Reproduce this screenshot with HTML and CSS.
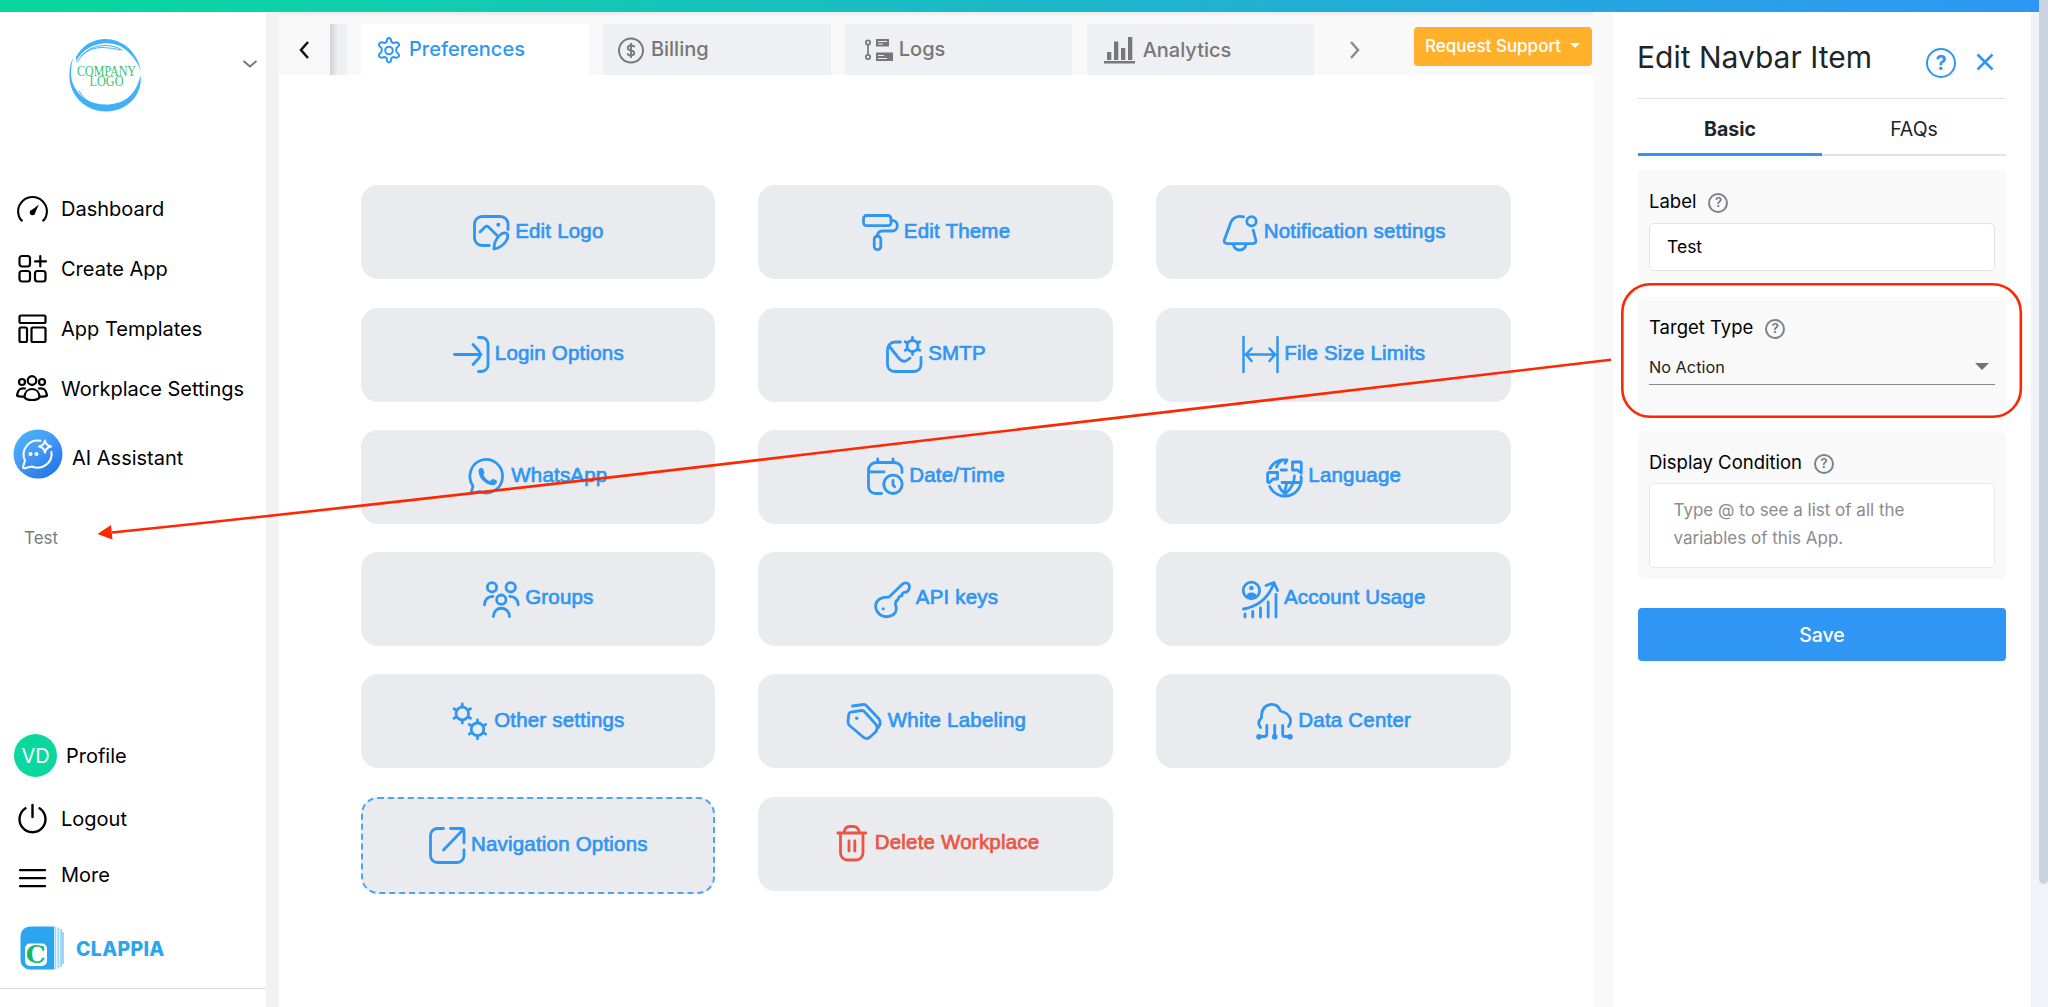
FILE: index.html
```html
<!DOCTYPE html>
<html lang="en">
<head>
<meta charset="utf-8">
<title>Workplace Settings</title>
<link rel="stylesheet" href="styles.css">
</head>
<body>
<div class="topbar"></div>
<div class="app">
  <aside class="sidebar">
    <div class="brand">
      <svg class="brand-logo" viewBox="0 0 76 76">
        <g fill="none" stroke="#3fb1fb" stroke-linecap="round">
          <path fill="#3fb1fb" stroke="none" d="M73.500 38C76 60 58 74.500 39 74.500C18 74.500 1 58 2.500 36Q2.500 28 6 21Q2 37 6 47C12 61 24 67.500 39 67.500C56 67.500 69 59 73.500 38Z"/>
          <path fill="#3fb1fb" stroke="none" d="M9 20C18 3 36-1 50 4C63 9 71 20 74 34C69 22 60 10 47 7C32 4 17 10 9 24Z"/>
          <path stroke-width="1" d="M10 25Q20 8 38 8.500Q48 8.500 55 13M14 19Q24 10 36 10.500Q47 11 53 13M12 54Q17 63 26 67"/>
        </g>
        <text x="39.500" y="38.800" text-anchor="middle" textLength="59" lengthAdjust="spacingAndGlyphs" class="logo-text">COMPANY</text>
        <text x="39.500" y="49" text-anchor="middle" textLength="34" lengthAdjust="spacingAndGlyphs" class="logo-text">LOGO</text>
      </svg>
      <svg class="brand-caret" viewBox="0 0 16 10"><path d="M1.500 2l6.500 5.500L14.500 2" fill="none" stroke="#6c757d" stroke-width="1.800"/></svg>
    </div>
    <nav class="nav">
      <a class="nav-item"><svg class="nav-icon" viewBox="0 0 32 32"><path d="M5.300 27.500A14.400 14.400 0 1 1 27.700 27.500M5 27.500h1.800M26.200 27.500h1.800" fill="none" stroke="#000" stroke-width="2"/><circle cx="16.500" cy="19.500" r="2.700"/><path d="M14.500 18l8.500-6.500-4.500 9.500z"/></svg><span>Dashboard</span></a>
      <a class="nav-item"><svg class="nav-icon line" viewBox="0 0 32 32"><rect x="3.500" y="3" width="10.500" height="10.500" rx="2.500"/><rect x="3.500" y="18" width="10.500" height="10.500" rx="2.500"/><rect x="19" y="18" width="10.500" height="10.500" rx="2.500"/><path d="M24.300 3v10.500M19 8.300h11"/></svg><span>Create App</span></a>
      <a class="nav-item"><svg class="nav-icon line" viewBox="0 0 32 32"><rect x="3.500" y="2.500" width="26" height="7.500" rx="1.500"/><rect x="3.500" y="14.500" width="7.500" height="14.500" rx="1.500"/><rect x="15.500" y="14.500" width="14" height="14.500" rx="1.500"/></svg><span>App Templates</span></a>
      <a class="nav-item"><svg class="nav-icon line" viewBox="0 0 32 32"><circle cx="16" cy="7.500" r="4.300"/><circle cx="6" cy="9" r="3"/><circle cx="26" cy="9" r="3"/><path d="M8.500 24.500c0-5 3-8.500 7.500-8.500s7.500 3.500 7.500 8.500q-2 2.500-7.500 2.500t-7.500-2.500zM9 15.500Q2 14 1 22.500q2 1.500 6.500 1M23 15.500q7-1.500 8 7-2 1.500-6.500 1"/></svg><span>Workplace Settings</span></a>
      <a class="nav-item assistant">
        <svg viewBox="0 0 50 50"><defs><linearGradient id="ai" x1="0" y1="0" x2=".8" y2="1"><stop offset="0" stop-color="#49b9fb"/><stop offset=".45" stop-color="#469df6"/><stop offset="1" stop-color="#2472e6"/></linearGradient></defs><circle cx="25" cy="25" r="24.500" fill="url(#ai)"/><g fill="none" stroke="#fff" stroke-width="2" stroke-linecap="round" stroke-linejoin="round"><path d="M27.500 11.800A14 14 0 0 0 12 31.500L10 38q0 1.500 1.500 1.200L19 37.500A14 14 0 0 0 38.500 23"/><path d="M32 11.500q.8 5 6 6-5.200 1-6 6-.8-5-6-6 5.200-1 6-6z"/></g><circle cx="17.500" cy="25" r="2" fill="#fff"/><circle cx="23.500" cy="25" r="2" fill="#fff"/></svg>
        <span>AI Assistant</span></a>
      <a class="nav-custom">Test</a>
    </nav>
    <div class="nav-bottom">
      <a class="nav-item profile"><span class="avatar">VD</span><span>Profile</span></a>
      <a class="nav-item logout"><svg class="nav-icon" viewBox="0 0 32 32"><path d="M9.500 5.300a13 13 0 1 0 14 0M16.500 2v12" fill="none" stroke="#000" stroke-width="2.400" stroke-linecap="round"/></svg><span>Logout</span></a>
      <a class="nav-item more"><svg class="nav-icon" viewBox="0 0 32 32"><path d="M4 7.200h25M4 15.200h25M4 23.200h25" stroke="#000" stroke-width="2.200" stroke-linecap="round"/></svg><span>More</span></a>
      <a class="clappia">
        <svg viewBox="0 0 44 44"><path d="M10 .500h24v43H10A9.500 9.500 0 0 1 .500 34V10A9.500 9.500 0 0 1 10 .500z" fill="#2ba5ee"/><path d="M34.300.500h2v43h-2zM37.300 1.500h2v41h-2z" fill="#a5d8f8"/><path d="M40.300 3h1.500v38h-1.500z" fill="#7fc9f6"/><path d="M42.500 6h1v32h-1z" fill="#41b0f1"/><rect x="5" y="17.500" width="22" height="22.500" rx="5" fill="#fff"/><text x="15.800" y="37" text-anchor="middle" class="clappia-c">C</text></svg>
        <span>CLAPPIA</span>
      </a>
    </div>
  </aside>

  <main class="main">
    <header class="tabs">
      <svg class="tab-prev" viewBox="0 0 12 18"><path d="M10 1L3 9l7 8" fill="none" stroke="#111" stroke-width="2.500"/></svg>
      <div class="tab-stub"></div>
      <div class="tab active"><svg viewBox="0 0 28 28"><g fill="none" stroke="#3096f3" stroke-width="2" stroke-linejoin="round"><circle cx="14" cy="14.500" r="3.800"/><path d="M11.700 5.500Q12 2 14 2t2.300 3.500q.5 1.200 2 1.500l3.200-.8q1.600.2 2.500 1.800.8 1.500-2.500 4-.7 2 0 4 3.300 2.500 2.500 4-.9 1.600-2.500 1.800l-3.200-.8q-1.500.3-2 1.500-.3 4-2.300 4t-2.300-4q-.5-1.200-2-1.500l-3.200.8q-1.600-.2-2.500-1.800-.8-1.500 2.500-4 .7-2 0-4Q3.200 9.500 4 8q.9-1.600 2.500-1.800L9.700 7q1.500-.3 2-1.500z"/></g></svg><span>Preferences</span></div>
      <div class="tab billing"><svg viewBox="0 0 28 28"><circle cx="14" cy="14.500" r="12" fill="none" stroke="#777" stroke-width="1.900"/><path d="M17.500 11.300Q17 9.500 14 9.500t-3.200 2.300Q10.800 14 14 14.500t3.300 2.500q0 2.300-3.300 2.300t-3.500-2M14 7v15" fill="none" stroke="#777" stroke-width="1.800"/></svg><span>Billing</span></div>
      <div class="tab logs"><svg viewBox="0 0 30 28"><g fill="none" stroke="#777" stroke-width="1.700"><circle cx="4" cy="5.500" r="2.200"/><circle cx="4" cy="20" r="2.200"/><path d="M4 7.500v10.500"/></g><path d="M12 2h13v7.500H12zM12 15.500h17V24H12z" fill="#777"/><path d="M14 4.500h9M14 7h5M14 18.500h6M14 21.500h9" stroke="#eff0f3" stroke-width="1"/></svg><span>Logs</span></div>
      <div class="tab analytics"><svg viewBox="0 0 32 28"><path d="M3 16h4.300v8H3zM10 5.500h4.300V24H10zM17 12h4.300v12H17zM24 1h4.300v23H24zM0 25h31v2.500H0z" fill="#777"/></svg><span>Analytics</span></div>
      <svg class="tab-next" viewBox="0 0 12 18"><path d="M2 1l7 8-7 8" fill="none" stroke="#8c8c8c" stroke-width="2.500"/></svg>
      <button class="support">Request Support<i class="caret"></i></button>
    </header>

    <section class="grid">
      <a class="card"><svg class="ic" viewBox="0 0 37 37"><path d="M35 15.500V10a7.500 7.500 0 0 0-7.500-7.500H9A7.500 7.500 0 0 0 1.500 10v14A7.500 7.500 0 0 0 9 31.500h7.300M7 18l5-5q1.800-1.600 3.600 0l8 8M21 35c0-6 2-10.500 6-14 3-2.800 6.800-2.800 7.700 0 .8 3-2.200 7.800-5.700 10.500-2.500 2-5 3.200-8 3.500z"/><circle class="f" cx="25.300" cy="10.700" r="2"/></svg><span>Edit Logo</span></a>
      <a class="card"><svg class="ic" viewBox="0 0 37 37"><rect x="1.500" y="1.500" width="27.500" height="10.200" rx="3"/><path d="M29 6.300h1a5.300 5.300 0 0 1 5.300 5.200v.500a5 5 0 0 1-5 5H20a4.500 4.500 0 0 0-4.500 5"/><rect x="12.200" y="22" width="6.600" height="13.700" rx="3.300"/></svg><span>Edit Theme</span></a>
      <a class="card"><svg class="ic" viewBox="0 0 37 37"><path d="M21.500 2.800C14 1 9 5 7.700 11.500L2.300 26q-.8 3.600 3 3.600h25.500q3.800 0 3-3.600l-2.600-9.800M11.500 30.500a6.200 5.500 0 0 0 12.400 0"/><circle cx="29.500" cy="7.300" r="4.700"/></svg><span>Notification settings</span></a>

      <a class="card"><svg class="ic" viewBox="0 0 37 37"><path d="M1.500 18.500H28M20 8.500l5.500 6q3.200 4 0 8L20 28.500M25.500 1.500h3a6.500 6.500 0 0 1 6.500 6.500v21a6.500 6.500 0 0 1-6.500 6.500h-3"/></svg><span>Login Options</span></a>
      <a class="card"><svg class="ic" viewBox="0 0 37 37"><path d="M14.500 6H9A7.500 7.500 0 0 0 1.500 13.500v15a7 7 0 0 0 7 7H28a7 7 0 0 0 7-7V21.500M3 10l10.500 13q4 4 8 1l2.500-2"/><circle cx="26.500" cy="10" r="5.500"/><path d="M26.500 4.500V1.500M26.500 15.500v3M31.300 7.200l2.500-1.500M21.700 12.800l-2.500 1.500M31.300 12.800l2.500 1.500M21.700 7.200l-2.500-1.500"/></svg><span>SMTP</span></a>
      <a class="card"><svg class="ic thin" viewBox="0 0 37 37"><path d="M1.500 1v35M35.500 1v35M3.500 18.500h30M9.500 12.500L4 18.500l5.500 6.500M27.500 12.500l5.500 6-5.500 6.500"/></svg><span>File Size Limits</span></a>

      <a class="card"><svg class="ic" viewBox="0 0 37 37"><path d="M2 35.500l2-7.500A16.300 16.800 0 1 1 10.500 33.500z"/><path class="f" d="M9.500 12.500q.5-2.700 3-2.700 1.300 0 1.800 1.500l1 3q.3 1-1 2.700 2 4 6.500 6.200l2.300-2q.7-.5 1.500-.1l3 1.500q.7.500.4 1.500-1 3.300-5 3.200-5-.6-9.500-5-3.800-4-4-9.800z"/></svg><span>WhatsApp</span></a>
      <a class="card"><svg class="ic" viewBox="0 0 37 37"><path d="M14.500 35.500H8.500a7 7 0 0 1-7-7V12a7.500 7.500 0 0 1 7.500-7.500h18.500A7.500 7.500 0 0 1 35 12v2.500M10.700 1v3M26 1v3M2 13.800h15M26 22.500v4.500l1.700 1.800"/><circle cx="26" cy="26.300" r="9.200"/></svg><span>Date/Time</span></a>
      <a class="card"><svg class="ic" viewBox="0 0 37 37"><path d="M4 10.500Q8 3 16 1.800h5M10.500 9q2-5 6-7M21 2l-2 3.200M15 12h5.500M26.500 4h7.500q1.300 0 1.300 1.300v10l-3.800-3.300h-5V4zM3 14.500h8.500V21H7l-3.500 3.500q-1.900.5-1.900-1.300v-7.500q0-1.200 1.400-1.200zM35 18.500A16.500 16.500 0 0 1 3.800 28.500M34.500 24.500H16M13 28q1.800 4.500 5.500 7.500M28.500 18q-.5 10.500-9 17.500M20.500 26l-2 8.500"/></svg><span>Language</span></a>

      <a class="card"><svg class="ic" viewBox="0 0 37 37"><circle cx="9" cy="6.300" r="4.700"/><circle cx="27.700" cy="6.300" r="4.700"/><circle cx="18.300" cy="18.700" r="4.700"/><path d="M1.500 23.800Q2 15.500 10 15.300M35.200 23.800q-.5-8.300-8.500-8.500M10.300 35.500c.5-11 15.500-11 16.200 0"/></svg><span>Groups</span></a>
      <a class="card"><svg class="ic" viewBox="0 0 37 37"><path d="M14.800 16.200L28 3.500q2.700-2.500 5.500-1.300 3 2 1.500 6-.8 3-4.500 3.200-2.500.3-2.500 3.300-3.500.3-4 3.800-3 2-2.500 5 2.500 6-2 10-5.500 3.700-11.500 1.300-7-4-6.300-11Q3.500 15.500 14.800 16.200z"/><circle class="f" cx="9.200" cy="27.800" r="1.600"/></svg><span>API keys</span></a>
      <a class="card"><svg class="ic" viewBox="0 0 37 37"><ellipse cx="9.400" cy="9.500" rx="8.200" ry="8.300"/><circle class="f" cx="9.400" cy="7" r="2.300"/><path class="f" d="M4.500 14.500q1-3 5-3t5 3l-2 2.500h-6z"/><path d="M1.500 28Q24 24 32 2M24 4.500L32 1.500 35.500 9.500M3 33v3M10.700 30.500V36M18.500 27v9M26.200 21v15M34 13.500V36"/></svg><span>Account Usage</span></a>

      <a class="card"><svg class="ic" viewBox="0 0 37 37"><circle cx="10.300" cy="10.500" r="6.300"/><path d="M10.300 3.500V1M10.300 17.500V20M16.300 7l2.200-1.300M4.300 14l-2.300 1.300M16.300 14l2.200 1.300M4.300 7L2 5.700"/><circle cx="25.500" cy="26.300" r="6.300"/><path d="M25.500 19.300v-2.500M25.500 33.300v2.500M31.500 22.800l2.200-1.300M19.500 29.800l-2.300 1.300M31.500 29.800l2.200 1.300M19.500 22.800l-2.300-1.300"/></svg><span>Other settings</span></a>
      <a class="card"><svg class="ic" viewBox="0 0 37 37"><path d="M6.500 3l11-1.500q1.800-.2 3 1.200L33 16q2 3 .8 6l-1.500 2.500M5 9.200L15.500 7.500q1.800-.2 3 1.200L30.500 22q1.500 3-.5 6.500l-6.500 6q-3 2-5.500.2L3.500 22.500q-1.700-2-1.500-4l.8-7.500q.3-1.600 2.200-1.800z"/><circle class="f" cx="10.700" cy="15.300" r="1.700"/></svg><span>White Labeling</span></a>
      <a class="card"><svg class="ic" viewBox="0 0 37 37"><path d="M4.500 24.500Q.500 19 5.500 15 4.800 3 14.500 1.500 22 1 24.500 8q8.500 2 10 8.500.5 3.500-2 7M10.800 22.500V31q0 2.500-2.500 2.500H3M18.700 22.500v11M26.700 22.500V31q0 2.500 2.500 2.500H34"/><circle class="f" cx="3" cy="33.700" r="2.800"/><circle class="f" cx="18.700" cy="33.700" r="2.800"/><circle class="f" cx="34" cy="33.700" r="2.800"/></svg><span>Data Center</span></a>

      <a class="card selected"><svg class="ic" viewBox="0 0 37 37"><path d="M14.500 1.500H8.500a7 7 0 0 0-7 7v20a7 7 0 0 0 7 7h19.500a7 7 0 0 0 7-7V22.800M21.500 1.500h11q2.500 0 2.500 2.500v12M14.500 23L34 2.700"/></svg><span>Navigation Options</span></a>
      <a class="card danger"><svg class="ic" viewBox="0 0 37 37"><path d="M4.800 8h28M7.500 8v20a7 7 0 0 0 7 7H23a7 7 0 0 0 7-7V8M11 7.500Q12 1.500 16.500 1.500h4Q25 1.500 26.500 7.500M16 16v10M21.800 16v10"/></svg><span>Delete Workplace</span></a>
    </section>
  </main>

  <aside class="panel">
    <header class="panel-head">
      <h1>Edit Navbar Item</h1>
      <span class="help big">?</span>
      <svg class="close" viewBox="0 0 18 18"><path d="M1.500 1.500l15 15M16.500 1.500l-15 15" stroke="#3096f3" stroke-width="2.600"/></svg>
    </header>
    <div class="panel-tabs"><div class="ptab on">Basic</div><div class="ptab">FAQs</div></div>
    <div class="field">
      <div class="field-label">Label<span class="help">?</span></div>
      <div class="input">Test</div>
    </div>
    <div class="field target">
      <div class="field-label">Target Type<span class="help">?</span></div>
      <div class="select">No Action<i class="select-caret"></i></div>
    </div>
    <div class="field condition">
      <div class="field-label">Display Condition<span class="help">?</span></div>
      <div class="textarea">Type @ to see a list of all the<br>variables of this App.</div>
    </div>
    <button class="save">Save</button>
  </aside>
  <div class="scroll-track"></div>
</div>
<div class="scroll-thumb"></div>
<svg class="annotation" viewBox="0 0 2048 1007">
  <rect x="1622.300" y="284.300" width="398.500" height="132.500" rx="28" fill="none" stroke="#ff2600" stroke-width="2.600"/>
  <path d="M1611 359.800Q1340 391 860 448T112 532.500" fill="none" stroke="#ff2600" stroke-width="2.600"/>
  <path d="M97.500 534l13.500-9 1.500 14.500z" fill="#ff2600"/>
</svg>
</body>
</html>
```
FILE: styles.css
```css
* { box-sizing: border-box; }
body { margin: 0; width: 2048px; height: 1007px; overflow: hidden; position: relative; background: #fff; font-family: Inter, "Liberation Sans", sans-serif; color: #000; }
button { border: 0; font-family: inherit; }

.topbar { height: 11.500px; background: linear-gradient(100deg, #06d79c 0%, #0fcfab 17%, #2e96f5 100%); }
.app { display: flex; height: 995.500px; }

/* Sidebar */
.sidebar { width: 266px; flex: none; background: #fff; display: flex; flex-direction: column; }
.brand { height: 168px; display: flex; padding: 25.500px 8px 0 67px; align-items: flex-start; justify-content: space-between; }
.brand-logo { width: 76px; height: 76px; overflow: visible; }
.brand-caret { width: 16px; height: 10px; margin-top: 22px; }
.logo-text { font: 15px "Liberation Serif", serif; fill: #35c36b; }
.nav-item { display: flex; align-items: center; height: 59.800px; padding-left: 16px; gap: 13px; font-size: 20px; white-space: nowrap; }
.nav-icon { width: 32px; height: 32px; }
.line { fill: none; stroke: #000; stroke-width: 2.200; stroke-linecap: round; stroke-linejoin: round; }
.assistant { height: 50px; margin-top: 10px; padding-left: 13px; gap: 9px; }
.assistant svg { width: 50px; height: 50px; }
.assistant span { padding-top: 9px; }
.nav-custom { display: block; margin-top: 46.500px; padding-left: 24px; font-size: 17px; line-height: 26px; color: #777b80; }
.nav-bottom { margin-top: auto; height: 273px; display: flex; flex-direction: column; }
.profile { height: 43px; padding-left: 14px; gap: 9px; }
.avatar { width: 43px; height: 43px; border-radius: 50%; background: #0bd89e; color: #fff; display: grid; place-items: center; font-size: 20px; }
.logout { height: 32px; margin-top: 26px; }
.more { height: 32px; margin-top: 28px; }
.more span { padding-bottom: 9px; }
.clappia { display: flex; align-items: center; gap: 12px; margin-top: 31px; height: 44px; padding-left: 20px; }
.clappia svg { width: 44px; height: 44px; }
.clappia span { font-size: 19.500px; font-weight: 800; letter-spacing: .3px; color: #2ba5ee; padding-top: 2px; }
.clappia-c { font: bold 25px "DejaVu Serif", serif; fill: #15b86c; }
.nav-bottom::after { content: ""; border-top: 1px solid #dcdcdc; margin-top: 18px; }

/* Main column */
.main { width: 1347px; flex: none; background: #f9f9f9; padding: 0 20px 0 13px; box-shadow: inset 13px 0 #f2f2f2; display: flex; flex-direction: column; }
.tabs { height: 63.500px; flex: none; padding: 12.500px 1.500px 0 19px; display: flex; align-items: stretch; background: #f9f9f9; box-shadow: inset 0 6px 6px -6px #0002; }
.tab-prev { width: 12px; height: 18px; margin: 17px 20px 0 0; }
.tab-stub { width: 17px; background: linear-gradient(90deg, #cfd0d3, #eff0f3 45%); margin-right: 14px; }
.tab { width: 227.700px; flex: none; margin-right: 14.200px; background: #eff0f3; display: flex; align-items: flex-start; padding: 12px 0 0 14px; font-size: 20px; font-weight: 500; color: #777; }
.tab svg { width: 28px; height: 28px; flex: none; }
.tab span { line-height: 26px; margin-left: 6px; }
.active { background: #fff; color: #3096f3; }
.logs { padding-left: 19px; }
.logs svg { width: 30px; margin-top: 1px; }
.logs span { margin-left: 5px; }
.analytics { padding-left: 17px; }
.analytics svg { width: 32px; }
.analytics span { margin-left: 7px; margin-top: 1px; }
.tab-next { width: 12px; height: 18px; margin: 17px 0 0 20px; }
.support { margin: 3px 0 0 auto; width: 178px; height: 38.500px; border-radius: 4px; background: #ffb12c; color: #fff; font-size: 17px; font-weight: 500; padding: 0 0 1px; display: flex; align-items: center; justify-content: center; }
.caret { border: 5px solid transparent; border-top-color: #fff; border-bottom: 0; margin-left: 9px; }

.grid { flex: 1; background: #fff; display: grid; grid-template-columns: repeat(3, 354.700px); column-gap: 43px; grid-auto-rows: 94px; row-gap: 28.300px; align-content: start; padding: 110.300px 0 0 81.500px; }
.card { background: #eaebef; border-radius: 17px; display: flex; align-items: center; justify-content: center; gap: 5px; padding-left: 1px; color: #3096f3; font-family: "Liberation Sans", sans-serif; font-size: 20.500px; letter-spacing: .2px; -webkit-text-stroke: .7px currentColor; white-space: nowrap; }
.card span { padding-bottom: 3.500px; }
.ic { width: 37px; height: 37px; overflow: visible; fill: none; stroke: currentColor; stroke-width: 2.800; stroke-linecap: round; stroke-linejoin: round; }
.ic .f { fill: currentColor; stroke: none; }
.thin { stroke-width: 2.500; }
.selected { height: 97px; border: 2px dashed #4ea4f3; }
.danger { color: #ea5544; }

/* Edit panel */
.panel { width: 418px; flex: none; background: #fff; padding: 0 25px; }
.panel-head { height: 87.500px; border-bottom: 1.500px solid #e0e0e0; display: flex; align-items: flex-start; }
.panel-head h1 { margin: 24px 0 0 -1px; font-size: 30px; line-height: 42px; font-weight: 400; color: #212529; flex: 1; white-space: nowrap; }
.help { display: inline-grid; place-items: center; width: 20px; height: 20px; border: 2px solid #7b838a; border-radius: 50%; color: #6c757d; font-size: 13px; font-weight: 600; line-height: 1; margin-left: 12px; }
.help.big { width: 30px; height: 30px; border: 2px solid #3096f3; color: #3096f3; font-size: 20px; font-weight: 700; margin: 36.500px 20px 0 0; }
.close { width: 18px; height: 18px; margin: 41.500px 12px 0 0; }
.panel-tabs { display: flex; height: 57px; }
.ptab { flex: 1; text-align: center; font-size: 19.500px; line-height: 60px; color: #212529; border-bottom: 2px solid #e3e3e3; }
.on { font-weight: 700; border-bottom: 3px solid #3096f3; }
.field { margin-top: 14px; background: #f9f9f9; border-radius: 6px; height: 112px; padding: 16px 11.500px 0 11px; }
.field-label { display: flex; align-items: center; height: 30px; font-size: 18.500px; }
.field-label .help { margin-top: 3px; }
.input { margin-top: 7px; height: 47.500px; border: 1px solid #e2e2e2; border-radius: 5px; background: #fff; font-size: 17.500px; line-height: 45px; padding-left: 17px; }
.target { margin-top: 15px; height: 119px; padding-top: 15px; }
.select { margin-top: 13px; height: 30px; line-height: 17px; font-size: 16.300px; color: #222; border-bottom: 1.500px solid #888; display: flex; justify-content: space-between; padding: 3.500px 6px 0 0; }
.select-caret { border: 7px solid transparent; border-top-color: #737373; border-bottom: 0; margin-top: 4px; }
.condition { margin-top: 15px; height: 148px; }
.textarea { margin-top: 6px; height: 85px; border: 1px solid #e8e8e8; border-radius: 5px; background: #fff; font-size: 17px; line-height: 28.300px; color: #8b8b8b; padding: 12px 24px 0 23.500px; }
.save { display: block; width: 100%; height: 53px; margin-top: 29px; border-radius: 4px; background: #3096f3; color: #fff; font-size: 19.500px; font-weight: 500; padding: 0; }
.scroll-track { width: 17px; background: #f0f4f9; }
.scroll-thumb { position: absolute; top: -8px; right: 0; width: 9px; height: 892px; background: #cbd5e1; border-radius: 5px; }
.annotation { position: absolute; inset: 0; width: 2048px; height: 1007px; pointer-events: none; }
```
